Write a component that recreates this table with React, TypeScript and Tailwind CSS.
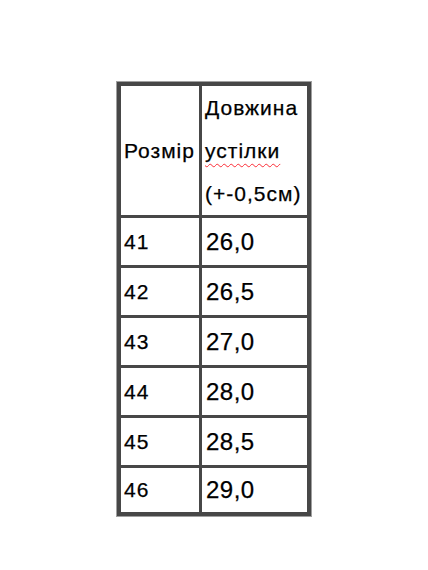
const rows = [
  ["41", "26,0"],
  ["42", "26,5"],
  ["43", "27,0"],
  ["44", "28,0"],
  ["45", "28,5"],
  ["46", "29,0"],
];

export default function App() {
  return (
    <div className="min-h-[570px] w-[428px] bg-white pl-[117px] pt-[82px] font-['Liberation_Sans',Arial,sans-serif] text-black [-webkit-text-stroke:0.25px_#000]">
      <div className="grid w-[194px] grid-cols-[78px_105px] gap-[3px] bg-[#474747] p-[4px] shadow-[0_0_0_1px_#a0a0a0]">
        <div className="flex h-[129px] items-center bg-white pl-[3px] text-[21px] tracking-[1px]">Розмір</div>
        <div className="flex h-[129px] flex-col justify-center bg-white pl-[3px] text-[21px] leading-[43px] tracking-[1px]">
          <span>Довжина</span>
          <span className="underline decoration-red-500 decoration-wavy decoration-1 underline-offset-[5px]">
            устілки
          </span>
          <span>(+-0,5см)</span>
        </div>
        {rows.map(([size, length], i) => (
          <div key={size} className="contents">
            <div
              className={`flex items-center bg-white pl-[3px] text-[21px] tracking-[1px] ${
                i === rows.length - 1 ? "h-[44px]" : "h-[47px]"
              }`}
            >
              {size}
            </div>
            <div
              className={`flex items-center bg-white pl-[4px] text-[24px] tracking-[0.5px] ${
                i === rows.length - 1 ? "h-[44px]" : "h-[47px]"
              }`}
            >
              {length}
            </div>
          </div>
        ))}
      </div>
    </div>
  );
}
